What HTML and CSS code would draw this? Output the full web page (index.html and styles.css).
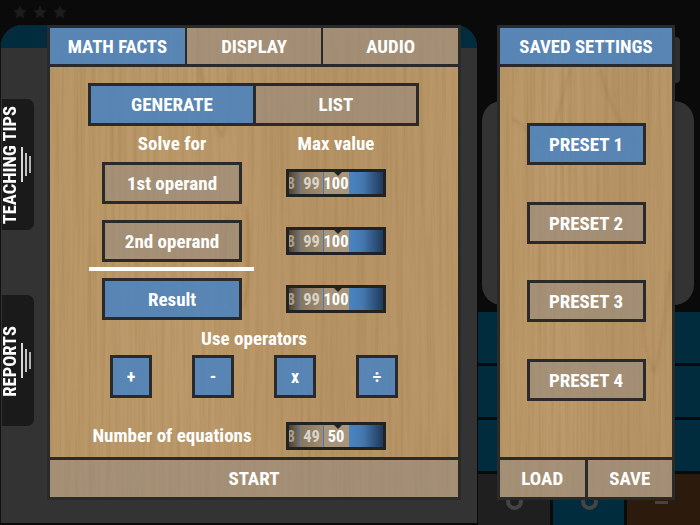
FILE: index.html
```html
<!DOCTYPE html>
<html lang="en">
<head>
<meta charset="utf-8">
<title>Math Facts settings</title>
<link rel="stylesheet" href="styles.css">
</head>
<body>
<svg class="defs" width="0" height="0" aria-hidden="true">
  <filter id="grain" x="0" y="0" width="100%" height="100%">
    <feTurbulence type="fractalNoise" baseFrequency="0.26 0.005" numOctaves="4" seed="7"/>
    <feColorMatrix type="matrix" values="0 0 0 0 0.38  0 0 0 0 0.24  0 0 0 0 0.09  1.3 0 0 0 -0.5"/>
  </filter>
  <filter id="soft"><feGaussianBlur stdDeviation="1.4"/></filter>
  <symbol id="bars" viewBox="0 0 12 36">
    <rect x="0" y="0" width="2" height="35" fill="#d8d8d8"/>
    <rect x="4" y="6" width="2" height="23" fill="#c4c4c4"/>
    <rect x="8" y="9" width="2" height="17" fill="#b0b0b0"/>
  </symbol>
</svg>

<div class="backdrop">
  <div class="stars">
    <svg class="star" viewBox="0 0 24 24"><path d="M12 1l3.4 7.3 7.9 1-5.8 5.5 1.5 7.9L12 18.8 5 22.7l1.5-7.9L.7 9.3l7.9-1z"/></svg>
    <svg class="star" viewBox="0 0 24 24"><path d="M12 1l3.4 7.3 7.9 1-5.8 5.5 1.5 7.9L12 18.8 5 22.7l1.5-7.9L.7 9.3l7.9-1z"/></svg>
    <svg class="star" viewBox="0 0 24 24"><path d="M12 1l3.4 7.3 7.9 1-5.8 5.5 1.5 7.9L12 18.8 5 22.7l1.5-7.9L.7 9.3l7.9-1z"/></svg>
  </div>
  <div class="back-panel">
    <div class="back-head"></div>
    <div class="side-tab side-tips">
      <span class="side-label">TEACHING TIPS</span>
      <svg class="side-bars"><use href="#bars"/></svg>
    </div>
    <div class="side-tab side-reports">
      <span class="side-label">REPORTS</span>
      <svg class="side-bars"><use href="#bars"/></svg>
    </div>
  </div>
  <div class="back-card"></div>
  <div class="back-notch"></div>
  <div class="tiles">
    <i class="tile"></i><i class="tile"></i><i class="tile"></i>
    <i class="tile"></i><i class="tile"></i><i class="tile"></i>
    <i class="tile"></i><i class="tile"></i><i class="tile"></i>
    <i class="tile tile-dark"><b class="tile-mark"></b></i><i class="tile"><b class="tile-mark"></b></i><i class="tile tile-brown"><b class="tile-dash"></b></i>
  </div>
</div>

<main class="stage">
  <section class="panel panel-main">
    <svg class="wood" width="100%" height="100%" aria-hidden="true">
      <rect width="100%" height="100%" filter="url(#grain)"/>
      <g fill="none" stroke="#8a5f2c" stroke-opacity=".22" filter="url(#soft)" stroke-width="3">
        <path d="M150 40c8 30 8 50 22 68 8-16 8-40 10-68"/>
        <path d="M178 190c-6 30-4 60 4 90"/>
        <path d="M196 180c6 40 4 70-2 100"/>
      </g>
    </svg>
    <nav class="tabs">
      <button class="tab is-on">MATH FACTS</button>
      <button class="tab">DISPLAY</button>
      <button class="tab">AUDIO</button>
    </nav>
    <div class="main-body">
      <div class="segment">
        <button class="seg is-on">GENERATE</button>
        <button class="seg">LIST</button>
      </div>
      <div class="row row-head">
        <span class="label">Solve for</span>
        <span class="label">Max value</span>
      </div>
      <div class="row">
        <button class="btn">1st operand</button>
        <div class="slider"><span class="cell cell-a">8</span><span class="cell cell-b">99</span><span class="cell cell-c">100</span><span class="cell-fill"></span></div>
      </div>
      <div class="row row-gap">
        <button class="btn">2nd operand</button>
        <div class="slider"><span class="cell cell-a">8</span><span class="cell cell-b">99</span><span class="cell cell-c">100</span><span class="cell-fill"></span></div>
      </div>
      <div class="rule"></div>
      <div class="row">
        <button class="btn is-on">Result</button>
        <div class="slider"><span class="cell cell-a">8</span><span class="cell cell-b">99</span><span class="cell cell-c">100</span><span class="cell-fill"></span></div>
      </div>
      <div class="ops-title label">Use operators</div>
      <div class="ops">
        <button class="op is-on">+</button>
        <button class="op is-on">-</button>
        <button class="op is-on">x</button>
        <button class="op is-on">÷</button>
      </div>
      <div class="row row-count">
        <span class="label label-count">Number of equations</span>
        <div class="slider"><span class="cell cell-a">8</span><span class="cell cell-b">49</span><span class="cell cell-c">50</span><span class="cell-fill"></span></div>
      </div>
    </div>
    <div class="footer">
      <button class="tab foot">START</button>
    </div>
  </section>

  <aside class="panel panel-saved">
    <svg class="wood" width="100%" height="100%" aria-hidden="true">
      <rect width="100%" height="100%" filter="url(#grain)"/>
      <g fill="none" stroke="#8a5f2c" stroke-opacity=".22" filter="url(#soft)" stroke-width="2.5">
        <path d="M12 90c14 10 22 20 36 30 8-30 18-60 22-80"/>
        <path d="M100 40c6 30 22 60 36 76"/>
        <path d="M146 270c-6 40 2 60 8 74 6-14 8-40 16-100"/>
      </g>
    </svg>
    <header class="tabs">
      <div class="tab is-on">SAVED SETTINGS</div>
    </header>
    <div class="saved-body">
      <button class="preset is-on">PRESET 1</button>
      <button class="preset">PRESET 2</button>
      <button class="preset">PRESET 3</button>
      <button class="preset">PRESET 4</button>
    </div>
    <div class="footer">
      <button class="tab foot">LOAD</button>
      <button class="tab foot">SAVE</button>
    </div>
  </aside>
</main>
</body>
</html>
```
FILE: styles.css
```css
* { box-sizing: border-box; }
html, body { margin: 0; padding: 0; }
body {
  width: 700px; height: 525px; position: relative; overflow: hidden;
  background: #0a0a0a; color: #fff;
  font-family: "Roboto Condensed", "Liberation Sans Narrow", Roboto, sans-serif;
  font-stretch: condensed; font-weight: 700;
}
.defs { position: absolute; }
button { font: inherit; font-stretch: condensed; color: inherit; padding: 0; margin: 0; border: 0; background: none; }

/* scenery behind the dialogs */
.backdrop { position: absolute; inset: 0; }
.stars { position: absolute; left: 13px; top: 5px; display: flex; gap: 6px; }
.star { width: 14px; height: 14px; fill: #1c1c1c; }
.back-panel {
  position: absolute; left: 0; top: 25px; width: 477px; height: 498px;
  background: #333; border-radius: 22px 22px 0 0; overflow: hidden;
  border-left: 1px solid #111;
}
.back-head { height: 23px; background: #012c3d; }
.side-tab {
  position: absolute; left: 1px; width: 32px; height: 131px;
  background: #1a1a1a; border-radius: 0 7px 7px 0;
}
.side-tips { top: 74px; }
.side-reports { top: 270px; }
.side-label {
  position: absolute; left: 0; bottom: 6px; width: 18px;
  writing-mode: vertical-rl; transform: rotate(180deg);
  font-size: 18.5px; line-height: 17px; white-space: nowrap; color: #fff;
}
.side-reports .side-label { bottom: 29px; }
.side-bars { position: absolute; left: 19px; top: 48px; width: 12px; height: 36px; }
.back-card {
  position: absolute; left: 482px; top: 101px; width: 212px; height: 204px;
  background: #333; border-radius: 20px;
}
.back-notch {
  position: absolute; left: 660px; top: 37px; width: 20px; height: 46px;
  background: #2e2e2e; border-radius: 4px;
}
.tiles {
  position: absolute; left: 478px; top: 312px; width: 222px;
  display: grid; grid-template-columns: 72px 71px 73px; column-gap: 3px; row-gap: 3.5px;
  grid-auto-rows: 50.5px;
}
.tile { display: block; position: relative; background: #012c3d; overflow: hidden; }
.tile-dark { background: #1f1f1f; }
.tile-brown { background: #2c1a0c; }
.tile-mark {
  position: absolute; left: 50%; top: 19px; width: 17px; height: 17px; margin-left: -8px;
  border: 4px solid #444; border-radius: 50%;
}
.tile-dash { position: absolute; left: 28px; top: 27px; width: 13px; height: 3px; background: #444; }

/* dialogs */
.stage {
  position: relative; display: flex; gap: 36px;
  padding: 25px 0 0 47px; align-items: flex-start;
}
.panel {
  position: relative; display: flex; flex-direction: column;
  height: 475px; border: 3px solid #2a2a2a;
  background: linear-gradient(90deg, #ba9767, #bd9a6b 35%, #b69365 70%, #ba9768);
}
.panel-main { width: 414px; }
.panel-saved { width: 178px; }
.wood { position: absolute; inset: 0; }
.tabs, .main-body, .saved-body, .footer { position: relative; }
.tabs { display: flex; height: 39px; border-bottom: 3px solid #2a2a2a; }
.tab {
  flex: 1; display: flex; align-items: center; justify-content: center;
  font-size: 18.8px; line-height: 1; color: #fff;
  background: rgba(150, 140, 130, .58);
}
.tabs .tab { padding-top: 2px; }
.tab + .tab { border-left: 2px solid #2a2a2a; }
.tab.is-on, .is-on.seg, .is-on.btn, .is-on.preset, .is-on.op { background: rgba(72, 130, 192, .86); }

.main-body { flex: 1; padding-top: 16px; }
.segment {
  display: flex; width: 331px; height: 43px; margin-left: 38px;
  border: 3px solid #2a2a2a;
}
.seg { font-size: 19px; background: rgba(150, 140, 130, .58); }
.seg:first-child { width: 162px; }
.seg:last-child { flex: 1; border-left: 3px solid #2a2a2a; }

.row {
  display: grid; grid-template-columns: 140px 100px; column-gap: 44px;
  padding-left: 52px; align-items: center; justify-items: center; height: 42px;
}
.row-head { height: 36px; padding-bottom: 2px; }
.row-gap { margin-top: 16px; }
.label { font-size: 19px; line-height: 1; white-space: nowrap; }
.btn {
  width: 140px; height: 42px; font-size: 19px;
  border: 3px solid #2a2a2a; background: rgba(150, 140, 130, .58);
}
.rule { width: 165px; height: 4px; margin: 5px 0 7px 39px; background: #fff; }

.slider {
  position: relative; display: flex; width: 100px; height: 28px;
  border: 3px solid #222; background: #222; font-size: 16.5px;
}
.slider::before {
  content: ""; position: absolute; left: 45px; top: 0; z-index: 1;
  border: 4px solid transparent; border-top-color: #222; border-bottom: 0;
}
.cell { display: flex; align-items: center; justify-content: center; height: 100%; overflow: hidden; border-right: 1px solid #4878b8; }
.cell-a { width: 11px; color: #a8a090; background: linear-gradient(90deg, #4a4238, #7a6c58); justify-content: flex-end; padding-right: 4px; }
.cell-b { width: 24px; color: #d8d4cc; background: linear-gradient(90deg, #85765f, #a08c6e); }
.cell-c { width: 25px; color: #fff; background: #a8957a; border-right: 0; padding-right: 1px; }
.cell-fill { flex: 1; background: linear-gradient(90deg, #4a84c4, #4578b0 40%, #1f3a5a); }

.ops-title { text-align: center; height: 35px; line-height: 37px; }
.ops { display: flex; gap: 40px; padding-left: 60px; }
.op { width: 42px; height: 43px; font-size: 18px; border: 3px solid #2a2a2a; }
.row-count { margin-top: 24px; height: 27px; }
.label-count { margin-top: -2px; }

.footer { display: flex; height: 40px; border-top: 3px solid #2a2a2a; }
.foot { font-size: 19px; }
.foot + .foot { border-left: 3px solid #2a2a2a; }

.saved-body { flex: 1; display: flex; flex-direction: column; align-items: center; gap: 36.5px; padding-top: 56px; }
.preset {
  width: 119px; height: 42px; font-size: 19px; flex: none; padding-top: 1px;
  border: 3px solid #2a2a2a; background: rgba(150, 140, 130, .58);
}
```
